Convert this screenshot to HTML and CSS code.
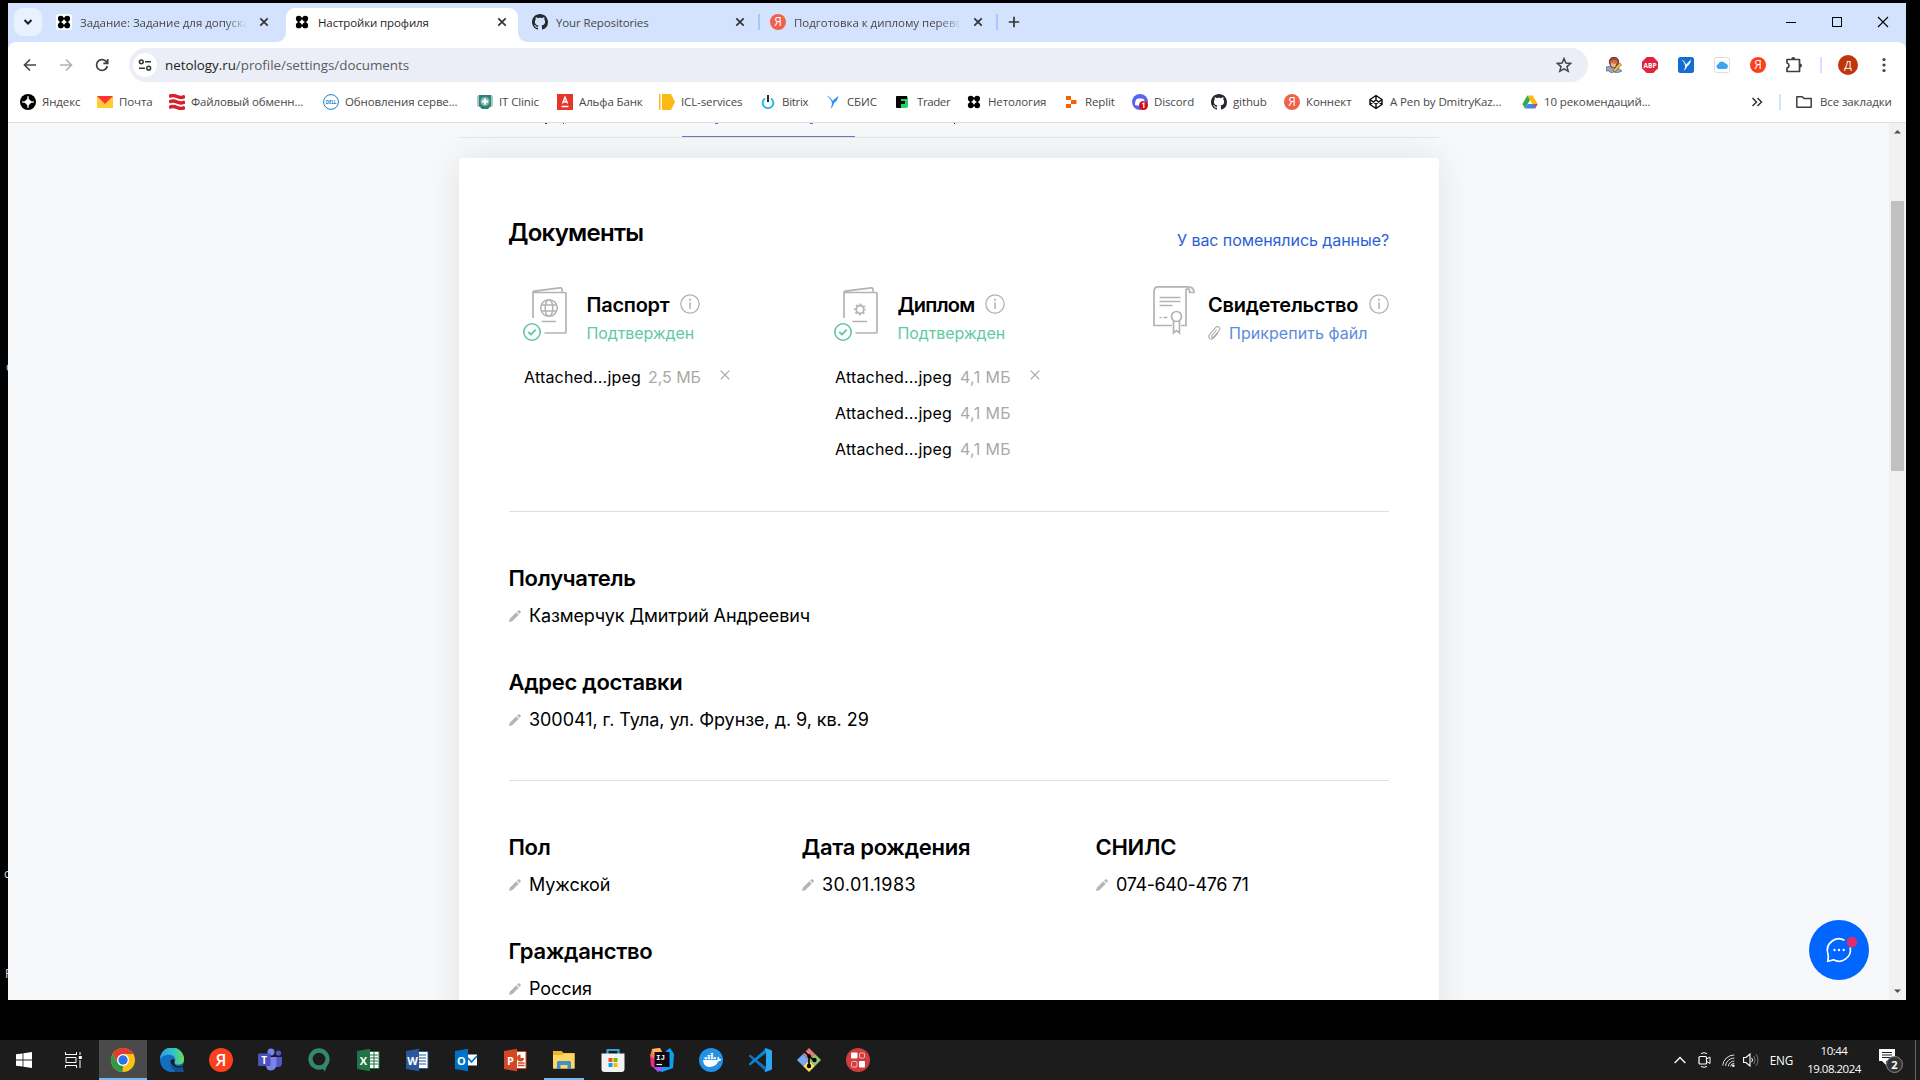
FILE: index.html
```html
<!DOCTYPE html>
<html lang="ru">
<head>
<meta charset="utf-8">
<title>Настройки профиля</title>
<link rel="stylesheet" href="styles.css">
</head>
<body>
<svg class="sprite" aria-hidden="true">
  <symbol id="netology" viewBox="0 0 16 16"><rect x="3" y="3" width="10" height="10" rx="1"/><circle cx="4.300" cy="4.100" r="3.300"/><circle cx="11.700" cy="4.100" r="3.300"/><circle cx="4.300" cy="11.900" r="3.300"/><circle cx="11.700" cy="11.900" r="3.300"/><path d="M8 4.600 9.300 6.700 11.400 8 9.300 9.300 8 11.400 6.700 9.300 4.600 8 6.700 6.700Z" fill="#fff"/></symbol>
  <symbol id="github" viewBox="0 0 16 16"><path d="M8 0C3.58 0 0 3.58 0 8c0 3.54 2.29 6.53 5.47 7.59.4.07.55-.17.55-.38 0-.19-.01-.82-.01-1.49-2.01.37-2.53-.49-2.69-.94-.09-.23-.48-.94-.82-1.13-.28-.15-.68-.52-.01-.53.63-.01 1.08.58 1.23.82.72 1.21 1.87.87 2.33.66.07-.52.28-.87.51-1.07-1.78-.2-3.64-.89-3.64-3.95 0-.87.31-1.59.82-2.15-.08-.2-.36-1.02.08-2.12 0 0 .67-.21 2.2.82.64-.18 1.32-.27 2-.27s1.36.09 2 .27c1.53-1.04 2.2-.82 2.2-.82.44 1.1.16 1.92.08 2.12.51.56.82 1.27.82 2.15 0 3.07-1.87 3.75-3.65 3.95.29.25.54.73.54 1.48 0 1.07-.01 1.93-.01 2.2 0 .21.15.46.55.38A8.01 8.01 0 0 0 16 8c0-4.42-3.58-8-8-8z" fill="#24292f"/></symbol>
  <symbol id="close" viewBox="0 0 16 16"><path d="M4.300 4.300 11.700 11.700M11.700 4.300 4.300 11.700" stroke="currentColor" stroke-width="1.700" fill="none"/></symbol>
  <symbol id="info" viewBox="0 0 20 20"><circle cx="10" cy="10" r="9.200" fill="none" stroke="#b3b3b3" stroke-width="1.300"/><rect x="9.300" y="8.300" width="1.500" height="6.700" fill="#b3b3b3"/><circle cx="10" cy="5.800" r="1.100" fill="#b3b3b3"/></symbol>
  <symbol id="pencil" viewBox="0 0 12 12"><path d="M0 12 .8 8.800 7.300 2.300 9.700 4.700 3.200 11.200ZM8.100 1.500 9.200.4Q9.900-.2 10.600.4L11.600 1.400Q12.200 2.100 11.600 2.800L10.500 3.900Z" fill="#b5b5b5"/></symbol>
  <symbol id="check" viewBox="0 0 18 18"><circle cx="9" cy="9" r="8.200" fill="#fff" stroke="#5fc7a3" stroke-width="1.600"/><path d="M5.200 9 8 11.500 12.700 6.600" fill="none" stroke="#5fc7a3" stroke-width="1.800"/></symbol>
  <symbol id="booklet" viewBox="0 0 45 56"><path d="M10 32V6.300Q10 5.300 11 5.200L37 1.800Q39 1.500 39 3.500V5.500M10 6.500H42Q43 6.500 43 7.500V46Q43 47 42 47H21.500M18.500 35.500H33" fill="none" stroke="#b3b3b3" stroke-width="1.700"/></symbol>
  <symbol id="cross-thin" viewBox="0 0 10 10"><path d="M.7.7 9.300 9.300M9.300.7.7 9.300" stroke="#a6a6a6" stroke-width="1.200"/></symbol>
</svg>

<div class="desktop">
  <span class="stray stray-a">с</span>
  <span class="stray stray-b">с</span>
  <span class="stray stray-c">F</span>

  <div class="window">
    <div class="tabstrip">
      <div class="tab-search"><svg width="12" height="12" viewBox="0 0 12 12"><path d="M2.500 4 6 7.500 9.500 4" fill="none" stroke="#1f1f1f" stroke-width="2"/></svg></div>
      <div class="tab"><span class="fav fav-white"><svg width="14" height="14"><use href="#netology"/></svg></span><span class="tab-title fade">Задание: Задание для допуска</span><svg class="tab-close" width="16" height="16"><use href="#close"/></svg></div>
      <div class="tab active"><span class="fav"><svg width="14" height="14"><use href="#netology"/></svg></span><span class="tab-title">Настройки профиля</span><svg class="tab-close" width="16" height="16"><use href="#close"/></svg></div>
      <div class="tab divided"><span class="fav"><svg width="16" height="16"><use href="#github"/></svg></span><span class="tab-title">Your Repositories</span><svg class="tab-close" width="16" height="16"><use href="#close"/></svg></div>
      <div class="tab divided"><span class="fav ya ya-soft">Я</span><span class="tab-title fade">Подготовка к диплому перево</span><svg class="tab-close" width="16" height="16"><use href="#close"/></svg></div>
      <svg class="new-tab" width="12" height="12" viewBox="0 0 12 12"><path d="M6 .8V11.200M.8 6H11.200" stroke="#333" stroke-width="1.700"/></svg>
      <div class="win-controls">
        <svg width="46" height="38" viewBox="0 0 46 38"><path d="M18 19.500H28" stroke="#000"/></svg>
        <svg width="46" height="38" viewBox="0 0 46 38"><rect x="18.500" y="14.500" width="9" height="9" fill="none" stroke="#000"/></svg>
        <svg width="46" height="38" viewBox="0 0 46 38"><path d="M18 14 28 24M28 14 18 24" stroke="#000" stroke-width="1.100"/></svg>
      </div>
    </div>

    <div class="toolbar">
      <div class="nav">
        <svg width="16" height="16" viewBox="0 0 16 16"><path d="M14 8H3M8 2.500 2.500 8 8 13.500" fill="none" stroke="#474747" stroke-width="1.700"/></svg>
        <svg width="16" height="16" viewBox="0 0 16 16"><path d="M2 8H13M8 2.500 13.500 8 8 13.500" fill="none" stroke="#b0b3b7" stroke-width="1.600"/></svg>
        <svg width="16" height="16" viewBox="0 0 16 16"><path d="M13.300 9A5.400 5.400 0 1 1 11.800 4.200L13.500 6M13.700 2V6.300H9.400" fill="none" stroke="#3c4043" stroke-width="1.700"/></svg>
      </div>
      <div class="omnibox">
        <span class="site-info"><svg width="14" height="14" viewBox="0 0 14 14"><circle cx="3.300" cy="3.800" r="1.900" fill="none" stroke="#333" stroke-width="1.500"/><circle cx="10.700" cy="10.200" r="1.900" fill="none" stroke="#333" stroke-width="1.500"/><path d="M7 3.800H13M1 10.200H7" stroke="#333" stroke-width="1.500"/></svg></span>
        <span class="url"><b>netology.ru</b>/profile/settings/documents</span>
        <svg class="star" width="16" height="16" viewBox="0 0 16 16"><path d="M8 1.500 9.900 6 14.800 6.400 11 9.600 12.200 14.300 8 11.800 3.800 14.300 5 9.600 1.200 6.400 6.100 6Z" fill="none" stroke="#444" stroke-width="1.500"/></svg>
      </div>
      <div class="extensions">
        <svg width="16" height="16" viewBox="0 0 16 16"><path d="M0 10 4 9 8 10 12 11 16 14 11 16 8 15 5 16 3 14 0 14Z" fill="#93a6c8" stroke="#555" stroke-width=".6"/><circle cx="8" cy="4.800" r="4.700" fill="#a8452e" stroke="#4a1d14" stroke-width=".8"/><path d="M4 5Q8 1.500 11.500 4.500L10 8H6Z" fill="#cf6d4d"/><path d="M4 6 5 10 9 11 11 7" fill="#e9b48d" stroke="#4a1d14" stroke-width=".7"/><path d="M7 13.500 13.500 6 15.500 7.700 9 15Z" fill="#f0c53f" stroke="#6b4a12" stroke-width=".6"/></svg>
        <svg width="16" height="16" viewBox="0 0 16 16"><path d="M4.700 0h6.600L16 4.700v6.600L11.300 16H4.700L0 11.300V4.700Z" fill="#e0233f"/><text x="8" y="10.700" text-anchor="middle" class="abp">ABP</text></svg>
        <svg width="16" height="16" viewBox="0 0 16 16"><rect width="16" height="16" rx="2.500" fill="#156cd3"/><path d="M3.500 2.500Q6.500 3.500 8 7.500 10 5.500 13 2.500 12.500 7 9.300 9.300 8.500 12 5.500 14 7.700 11 7.200 8.500 6.500 5 3.500 2.500Z" fill="#fff"/></svg>
        <svg width="16" height="16" viewBox="0 0 16 16"><rect x=".5" y=".5" width="15" height="15" rx="2" fill="#fff" stroke="#d9dde2"/><path d="M4.500 12a2.600 2.600 0 0 1-.2-5A3.800 3.800 0 0 1 11 6.200 3 3 0 0 1 12 12Z" fill="#3ba4f3"/></svg>
        <span class="ya">Я</span>
        <svg width="18" height="18" viewBox="0 0 18 18"><path d="M2 3.500H14.500V15.500H2V12Q4 11.500 4 9.500T2 7Z" fill="none" stroke="#3c4043" stroke-width="1.700" stroke-linejoin="round"/><path d="M6.300 3A2 2 0 0 1 10.300 3ZM15 7.500A2 2 0 0 1 15 11.500Z" fill="#3c4043"/></svg>
      </div>
      <span class="tool-sep"></span>
      <span class="avatar">Д</span>
      <svg class="kebab" width="4" height="16" viewBox="0 0 4 16"><circle cx="2" cy="2.500" r="1.600"/><circle cx="2" cy="8" r="1.600"/><circle cx="2" cy="13.500" r="1.600"/></svg>
    </div>

    <div class="bookmarks">
      <div class="bm"><svg width="16" height="16" viewBox="0 0 16 16"><circle cx="8" cy="8" r="8"/><path d="M8 2Q8.300 7.700 14 8 8.300 8.300 8 14 7.700 8.300 2 8 7.700 7.700 8 2Z" fill="#fff" stroke="#fff" stroke-width=".6"/></svg><span>Яндекс</span></div>
      <div class="bm"><svg width="16" height="16" viewBox="0 0 16 16"><rect y="2" width="16" height="12" fill="#fc3"/><path d="M0 2H16L8 10Z" fill="#f33"/></svg><span>Почта</span></div>
      <div class="bm"><svg width="16" height="16" viewBox="0 0 16 16"><g fill="none" stroke="#d81f2c" stroke-width="3.400"><path d="M0 2.500Q4 .5 8 2.500T16 2.300"/><path d="M0 8Q4 6 8 8T16 7.800"/><path d="M0 13.500Q4 11.500 8 13.500T16 13.300"/></g></svg><span>Файловый обменн...</span></div>
      <div class="bm"><svg width="16" height="16" viewBox="0 0 16 16"><circle cx="8" cy="8" r="7.400" fill="#fff" stroke="#1683c2" stroke-width="1"/><text x="8" y="9.800" text-anchor="middle" class="dell">DELL</text></svg><span>Обновления серве...</span></div>
      <div class="bm"><svg width="16" height="16" viewBox="0 0 16 16"><rect y="1" width="16" height="12" rx="2" fill="#a9c9c6"/><path d="M2 1H14V12L11 15H5L2 12Z" fill="#317f7b"/><circle cx="8" cy="7.500" r="4.600" fill="#7fbcae"/><path d="M8 4.500V10.500M5 7.500H11" stroke="#fff" stroke-width="2.200"/></svg><span>IT Clinic</span></div>
      <div class="bm"><svg width="16" height="16" viewBox="0 0 16 16"><rect width="16" height="16" fill="#e8352b"/><path d="M5.500 9.500 8 3.200 10.500 9.500M6.200 7.800H9.800M4.600 12.500H11.400" fill="none" stroke="#fff" stroke-width="1.400"/></svg><span>Альфа Банк</span></div>
      <div class="bm"><svg width="16" height="16" viewBox="0 0 16 16"><path d="M0 0H1.500V16H0ZM3 0H12L16 8 12 16H3Z" fill="#fdb913"/></svg><span>ICL-services</span></div>
      <div class="bm tight"><svg width="16" height="16" viewBox="0 0 16 16"><path d="M5 4.500A5.300 5.300 0 1 0 11 4.500" fill="none" stroke="#27bdde" stroke-width="2"/><path d="M8 1V8" stroke="#111" stroke-width="1.800"/></svg><span>Bitrix</span></div>
      <div class="bm"><svg width="16" height="16" viewBox="0 0 16 16"><path d="M1.500 1.500Q6 3 7.500 7 10 4.500 13.500 2 12.500 7 9 9 8.500 12.500 5.500 15 7.500 11 6.800 8 5.500 4.500 1.500 1.500Z" fill="#2a8fee"/></svg><span>СБИС</span></div>
      <div class="bm tighter"><svg width="16" height="16" viewBox="0 0 16 16"><rect x="1" y="2" width="12" height="12" rx="2" fill="#23d366"/><path d="M1 3Q1 2 2 2H12V5H6V7H10V10H6V14H2Q1 14 1 13Z" fill="#000"/></svg><span>Trader</span></div>
      <div class="bm"><svg width="16" height="16" viewBox="0 0 16 16"><g transform="translate(1 1) scale(.87)"><use href="#netology" width="16" height="16"/></g></svg><span>Нетология</span></div>
      <div class="bm"><svg width="16" height="16" viewBox="0 0 16 16"><path d="M3 2H8V6H3ZM8 6H13.500V10H8ZM3 10H8V14H3Z" fill="#f26207"/></svg><span>Replit</span></div>
      <div class="bm"><svg width="16" height="16" viewBox="0 0 16 16"><circle cx="8" cy="8" r="8" fill="#5865f2"/><path d="M3 11Q3 5 6 4.500H10Q13 5 13 9L8 12Z" fill="#fff"/><circle cx="11.500" cy="11.500" r="4.500" fill="#d40c1a"/><path d="M10.300 10 11.800 9V14" fill="none" stroke="#fff" stroke-width="1.300"/></svg><span>Discord</span></div>
      <div class="bm"><svg width="16" height="16"><use href="#github"/></svg><span>github</span></div>
      <div class="bm"><span class="ya ya-soft">Я</span><span>Коннект</span></div>
      <div class="bm"><svg width="16" height="16" viewBox="0 0 16 16"><path d="M8 1.500 14 5.500V10.500L8 14.500 2 10.500V5.500ZM8 1.500V5.500M8 10.500V14.500M2 5.500 8 10 14 5.500M2 10.500 8 6 14 10.500" fill="none" stroke="#111" stroke-width="1.500" stroke-linejoin="round"/></svg><span>A Pen by DmitryKaz...</span></div>
      <div class="bm"><svg width="16" height="16" viewBox="0 0 16 16"><path d="M5.300 1.500H10.700L15.600 10H10.300Z" fill="#fbbc04"/><path d="M5.300 1.500 8 6 3 14.500 .4 10Z" fill="#34a853"/><path d="M5.700 10H15.600L13 14.500H3Z" fill="#4285f4"/><path d="M12.500 10H15.600L13 14.500Z" fill="#ea4335"/></svg><span>10 рекомендаций...</span></div>
      <svg class="more" width="12" height="12" viewBox="0 0 12 12"><path d="M1.500 2 5.500 6 1.500 10M6.500 2 10.500 6 6.500 10" fill="none" stroke="#333" stroke-width="1.500"/></svg>
      <span class="bm-sep"></span>
      <div class="bm all"><svg width="16" height="16" viewBox="0 0 16 16"><path d="M.8 3V13.200H15.200V4.500H8L6.300 2.700H.8Z" fill="none" stroke="#3c4043" stroke-width="1.500" stroke-linejoin="round"/></svg><span>Все закладки</span></div>
    </div>

    <div class="viewport">
      <main class="page">
        <div class="subnav"><span class="subnav-current"></span></div>
        <section class="card">
          <header class="card-head">
            <h1>Документы</h1>
            <a class="changed">У вас поменялись данные?</a>
          </header>

          <div class="docs">
            <article class="doc">
              <div class="doc-head">
                <div class="doc-icon"><svg width="45" height="56"><use href="#booklet"/></svg><svg class="emblem" width="20" height="20" viewBox="0 0 20 20"><g fill="none" stroke="#b3b3b3" stroke-width="1.500"><circle cx="10" cy="10" r="8.300"/><ellipse cx="10" cy="10" rx="3.800" ry="8.300"/><path d="M2.500 7H17.500M2.500 13H17.500"/></g></svg><svg class="verified" width="18" height="18"><use href="#check"/></svg></div>
                <div class="doc-text">
                  <h2><span>Паспорт</span><svg width="20" height="20"><use href="#info"/></svg></h2>
                  <p class="ok">Подтвержден</p>
                </div>
              </div>
              <ul>
                <li><span>Attached...jpeg</span><i class="wide">2,5 МБ</i><svg width="10" height="10"><use href="#cross-thin"/></svg></li>
              </ul>
            </article>

            <article class="doc">
              <div class="doc-head">
                <div class="doc-icon"><svg width="45" height="56"><use href="#booklet"/></svg><svg class="emblem" width="20" height="20" viewBox="0 0 20 20"><g fill="none" stroke="#b3b3b3"><circle cx="10" cy="11.500" r="3.800" stroke-width="1.700"/><circle cx="10" cy="11.500" r="5.200" stroke-width="1.600" stroke-dasharray="2.040 2.040" stroke-dashoffset="1.020"/></g></svg><svg class="verified" width="18" height="18"><use href="#check"/></svg></div>
                <div class="doc-text">
                  <h2><span class="diploma">Диплом</span><svg width="20" height="20"><use href="#info"/></svg></h2>
                  <p class="ok">Подтвержден</p>
                </div>
              </div>
              <ul>
                <li><span>Attached...jpeg</span><i>4,1 МБ</i><svg width="10" height="10"><use href="#cross-thin"/></svg></li>
                <li><span>Attached...jpeg</span><i>4,1 МБ</i></li>
                <li><span>Attached...jpeg</span><i>4,1 МБ</i></li>
              </ul>
            </article>

            <article class="doc">
              <div class="doc-head">
                <div class="doc-icon scroll-icon"><svg width="42" height="50" viewBox="0 0 42 50"><g fill="none" stroke="#b3b3b3" stroke-width="1.700"><path d="M19 39.500H1V6Q1 .9 5 .9H35Q41 .9 41 6.500H36.500V4.500Q36.500 2.800 34.700 2.800T33 5V39.500H28"/><circle cx="23.500" cy="30.500" r="5"/><path d="M20.500 35V47L23.500 44.500 26.500 47V35"/><path d="M6.500 11.500H27.500M6.500 15.500H27.500M6.500 19.500H19.500M6.500 31.500H8.500M10.500 31.500H14.500"/></g></svg></div>
                <div class="doc-text">
                  <h2><span>Свидетельство</span><svg width="20" height="20"><use href="#info"/></svg></h2>
                  <p class="attach"><svg width="13" height="14" viewBox="0 0 13 14"><path d="M8.500 4 3.900 9.500Q3.200 10.500 4 11.200 4.900 11.800 5.700 10.900L11.200 4.500Q12.700 2.500 11 1.100 9.200-.1 7.500 1.600L1.700 8.300Q-.2 10.800 1.800 12.600 4 14 6 11.700L10.300 6.700" fill="none" stroke="#aaa" stroke-width="1.100"/></svg><span>Прикрепить файл</span></p>
                </div>
              </div>
            </article>
          </div>

          <div class="group">
            <div class="field"><h3>Получатель</h3><p><svg width="12" height="12"><use href="#pencil"/></svg><span class="name">Казмерчук Дмитрий Андреевич</span></p></div>
            <div class="field"><h3>Адрес доставки</h3><p><svg width="12" height="12"><use href="#pencil"/></svg><span>300041, г. Тула, ул. Фрунзе, д. 9, кв. 29</span></p></div>
          </div>

          <div class="group columns">
            <div class="field"><h3>Пол</h3><p><svg width="12" height="12"><use href="#pencil"/></svg><span>Мужской</span></p></div>
            <div class="field"><h3>Дата рождения</h3><p><svg width="12" height="12"><use href="#pencil"/></svg><span class="date">30.01.1983</span></p></div>
            <div class="field"><h3>СНИЛС</h3><p><svg width="12" height="12"><use href="#pencil"/></svg><span class="snils">074-640-476 71</span></p></div>
            <div class="field"><h3>Гражданство</h3><p><svg width="12" height="12"><use href="#pencil"/></svg><span>Россия</span></p></div>
          </div>
        </section>
      </main>
      <div class="scrollbar">
        <svg width="17" height="17" viewBox="0 0 17 17"><path d="M5 10.500 8.500 7 12 10.500Z" fill="#505050"/></svg>
        <span class="thumb"></span>
        <svg width="17" height="17" viewBox="0 0 17 17"><path d="M5 6.500 8.500 10 12 6.500Z" fill="#505050"/></svg>
      </div>
      <div class="chat"><svg width="60" height="60" viewBox="0 0 60 60"><circle cx="30" cy="30" r="30" fill="#06f"/><path d="M35.500 20.300A11.500 11.500 0 0 0 19 34Q19.800 37 18.800 41.200 22.500 40.700 24.500 39.800A11.500 11.500 0 0 0 41.200 27.500" fill="none" stroke="#fff" stroke-width="1.700"/><circle cx="25.500" cy="30" r="1.200" fill="#fff"/><circle cx="30" cy="30" r="1.200" fill="#fff"/><circle cx="34.700" cy="30" r="1.200" fill="#fff"/><circle cx="43" cy="22" r="5.200" fill="#e6286e"/></svg></div>
    </div>
  </div>

  <footer class="taskbar">
    <div class="task"><svg width="16" height="16" viewBox="0 0 16 16"><path d="M0 2.300 6.600 1.400V7.500H0ZM7.400 1.300 16 0V7.500H7.400ZM0 8.400H6.600V14.600L0 13.700ZM7.400 8.400H16V16L7.400 14.700Z" fill="#fff"/></svg></div>
    <div class="task"><svg width="17" height="16" viewBox="0 0 17 16"><path d="M.5 0V3M11.500 0V3M.5 2.500H11.500M.5 16V13M11.500 16V13M.5 13.500H11.500M1 5.500H11V10.500H1ZM15 0V3M15 8V16" fill="none" stroke="#fff"/><rect x="13.800" y="4" width="3" height="3" fill="#fff"/></svg></div>
    <div class="task first focused"><svg width="24" height="24" viewBox="0 0 24 24"><circle cx="12" cy="12" r="12" fill="#fbc116"/><path d="M1.600 6A12 12 0 0 1 22.400 6H12L6.800 15Z" fill="#e33b2e"/><path d="M1.600 6 6.800 15 12 18 11.500 24A12 12 0 0 1 1.600 6Z" fill="#2d9a48"/><circle cx="12" cy="12" r="6" fill="#fff"/><circle cx="12" cy="12" r="4.700" fill="#2a74e8"/></svg></div>
    <div class="task"><svg width="24" height="24" viewBox="0 0 24 24"><defs><linearGradient id="edge" x1="0" x2="1"><stop offset="0" stop-color="#279fe2"/><stop offset=".6" stop-color="#35c4c5"/><stop offset="1" stop-color="#6fdc56"/></linearGradient></defs><circle cx="12" cy="12" r="12" fill="#126fbf"/><path d="M0 11A12 12 0 0 1 24 11.500Q24 16 19 16.500 13.500 16.500 15 13.500 16.500 8.500 11 7 4 6 0 11Z" fill="url(#edge)"/><path d="M9.500 12Q9.500 18.500 16 19.500 20 20 22.800 17.500L24 16V24H18Q10 22 9.500 12Z" fill="#0f4f92"/><path d="M24 16Q20 19.500 16 17.500 13.500 16 14.500 13.800 15.300 11.500 12.500 11 9.500 12 11 15.500 14 20.300 20 19.500L22.500 18.300 24 24Z" fill="#1c1c1c"/></svg></div>
    <div class="task"><span class="ya ya-big">Я</span></div>
    <div class="task"><svg width="24" height="24" viewBox="0 0 24 24"><circle cx="13" cy="4" r="3.500" fill="#7b83eb"/><circle cx="20.500" cy="5" r="2.600" fill="#5059c9"/><path d="M16 9H24V15Q24 19 20 19H16Z" fill="#5059c9"/><path d="M8 9H18.500V16Q18 22.500 13 22.500T8 17Z" fill="#7b83eb"/><rect y="5.500" width="12.500" height="12.500" rx="1" fill="#4b53bc"/><text x="6.200" y="15.500" text-anchor="middle" class="office teams">T</text></svg></div>
    <div class="task"><svg width="24" height="24" viewBox="0 0 24 24"><circle cx="12" cy="11" r="8.500" fill="none" stroke="#34896b" stroke-width="4.300"/><path d="M12 17 20 17 18 23.500Z" fill="#34896b"/></svg></div>
    <div class="task"><svg width="24" height="24" viewBox="0 0 24 24"><path d="M12 3.500H23V20.500H12Z" fill="#fff" stroke="#217346"/><path d="M14 7H22M14 10H22M14 13H22M14 16H22M18 4V20" stroke="#217346"/><path d="M1 3 14 .8V23.200L1 21Z" fill="#217346"/><text x="7.500" y="16.500" text-anchor="middle" class="office">X</text></svg></div>
    <div class="task"><svg width="24" height="24" viewBox="0 0 24 24"><path d="M12 3.500H23V20.500H12Z" fill="#fff" stroke="#2b579a"/><path d="M14 7H21M14 10H21M14 13H21M14 16H21" stroke="#2b579a"/><path d="M1 3 14 .8V23.200L1 21Z" fill="#2b579a"/><text x="7.500" y="16.500" text-anchor="middle" class="office">W</text></svg></div>
    <div class="task"><svg width="24" height="24" viewBox="0 0 24 24"><path d="M13 6.500H23V17.500H13Z" fill="#fff"/><path d="M14 10 17.500 14 23 8" fill="none" stroke="#0072c6" stroke-width="1.700"/><path d="M1 3 14 .8V23.200L1 21Z" fill="#0072c6"/><text x="7.500" y="16.500" text-anchor="middle" class="office">O</text></svg></div>
    <div class="task"><svg width="24" height="24" viewBox="0 0 24 24"><path d="M12 3.500H23V20.500H12Z" fill="#fff" stroke="#d24726"/><path d="M15 15H21.500M15 17.500H21.500" stroke="#d24726" stroke-width="1.300"/><path d="M17.500 6.500A3.500 3.500 0 1 0 21 10H17.500Z" fill="#d24726"/><path d="M1 3 14 .8V23.200L1 21Z" fill="#d24726"/><text x="7.500" y="16.500" text-anchor="middle" class="office">P</text></svg></div>
    <div class="task open"><svg width="24" height="24" viewBox="0 0 24 24"><path d="M1 3H9.500L11.500 5H22.500V20.500H1Z" fill="#f0b429"/><path d="M1 7H10L12 5.500H22.500V20.500H1Z" fill="#fdd663"/><path d="M5 21V14.500Q5 13 6.500 13H17.500Q19 13 19 14.500V21H15.500V17H8.500V21Z" fill="#3e90cc"/></svg></div>
    <div class="task"><svg width="24" height="24" viewBox="0 0 24 24"><path d="M6.500 6V2H17.500V6" fill="none" stroke="#2fa0d8" stroke-width="2.200"/><path d="M.5 5.500H23.500V21Q23.500 24 20.500 24H3.500Q.5 24 .5 21Z" fill="#f2f2f2"/><path d="M7.500 10H11.500V14H7.500Z" fill="#f25022"/><path d="M12.500 10H16.500V14H12.500Z" fill="#7fba00"/><path d="M7.500 15H11.500V19H7.500Z" fill="#00a4ef"/><path d="M12.500 15H16.500V19H12.500Z" fill="#ffb900"/></svg></div>
    <div class="task"><svg width="24" height="24" viewBox="0 0 24 24"><path d="M2 1 10 0 13 6 8 20 1 18 3 12 0 8Z" fill="#f97a3d"/><path d="M2 1 10 0 12 4 4 8Z" fill="#fdb45c"/><path d="M0 8 5 11 8 22 1 18Z" fill="#e42f7d"/><path d="M16 3 20 0 24 6 23 20 12 24 6 22Z" fill="#0ea0f0"/><path d="M3 19 8 24 14 20Z" fill="#b74af7"/><rect x="4.500" y="4" width="15" height="15" fill="#0b0612"/><text x="6" y="11.500" class="ij">IJ</text><path d="M6.500 16.500H12" stroke="#fff" stroke-width="1.200"/></svg></div>
    <div class="task"><svg width="24" height="24" viewBox="0 0 24 24"><circle cx="12" cy="12" r="12" fill="#2391e6"/><path d="M4 12H18.500Q17.800 10 19 8.500 20.500 9.500 20.500 11 22 10.800 22.500 11.300 21.500 13.500 19.300 13.300 17 19 10.500 19 4.500 19 4 12Z" fill="#fff"/><path d="M5.500 9.300H8V11.300H5.500ZM8.600 9.300H11.100V11.300H8.600ZM11.700 9.300H14.200V11.300H11.700ZM14.700 9.300H17V11.300H14.700ZM8.600 7H11.100V8.800H8.600ZM11.700 7H14.200V8.800H11.700ZM11.700 5H14.200V6.500H11.700Z" fill="#fff"/></svg></div>
    <div class="task"><svg width="24" height="24" viewBox="0 0 24 24"><path d="M.5 8 2.200 6.500 18 19V23.500Z" fill="#0c74be"/><path d="M.5 16 2.200 17.500 18 5V.5Z" fill="#0a86d8"/><path d="M17.500 0 24 2.500V21.500L17.500 24 16.500 23 18 21V3L16.500 1Z" fill="#2aa9f3"/></svg></div>
    <div class="task"><svg width="24" height="24" viewBox="0 0 24 24"><path d="M12 0 18 6 12 12 6 6Z" fill="#e9777b"/><path d="M6 6 12 12 6 18 0 12Z" fill="#7aa7f5"/><path d="M18 6 24 12 18 18 12 12Z" fill="#8fc96c"/><path d="M12 12 18 18 12 24 6 18Z" fill="#fbdc6a"/><path d="M7.500 3.500 12 8V19M12 8 17 12.500" fill="none" stroke="#161616" stroke-width="1.800"/><circle cx="12" cy="8" r="1.900"/><circle cx="12" cy="18" r="2.200"/><circle cx="17.500" cy="12" r="2.200"/></svg></div>
    <div class="task"><svg width="24" height="24" viewBox="0 0 24 24"><circle cx="12" cy="12" r="12" fill="#cf3d40"/><rect x="5" y="4.500" width="6.500" height="6" rx="1" fill="#fff"/><rect x="13" y="13" width="6" height="6.500" rx="1" fill="#fff"/><rect x="13.500" y="5" width="5" height="5" rx="1" fill="none" stroke="#f3b9ba"/><rect x="5.500" y="13.500" width="5.500" height="5.500" rx="1" fill="none" stroke="#f3b9ba"/></svg></div>
    <div class="tray">
      <svg width="12" height="8" viewBox="0 0 12 8"><path d="M.7 7 6 1.500 11.300 7" fill="none" stroke="#fff" stroke-width="1.300"/></svg>
      <svg width="13" height="16" viewBox="0 0 13 16"><path d="M3 1.500Q6 0 9 1.500M3 14.500Q6 16 9 14.500" fill="none" stroke="#fff"/><rect x="1" y="4.500" width="7.500" height="7.500" rx="1" fill="none" stroke="#fff" stroke-width="1.200"/><path d="M8.500 7 12 5V11.500L8.500 9.500" fill="none" stroke="#fff"/></svg>
      <svg width="13" height="13" viewBox="0 0 13 13"><path d="M.7 11.500A11.500 11.500 0 0 1 12.300 1M3.500 12A8.800 8.800 0 0 1 12.300 4M6.300 12.300A6 6 0 0 1 12.300 7M8.500 12.500A4 4 0 0 1 12.300 9.300" fill="none" stroke="#ddd"/><circle cx="11.300" cy="11.700" r="1.300" fill="#fff"/></svg>
      <svg width="16" height="14" viewBox="0 0 16 14"><path d="M.6 4.500H3L7 1V13L3 9.500H.6Z" fill="none" stroke="#fff" stroke-width="1.100"/><path d="M8.700 4.800Q10.300 7 8.700 9.200" fill="none" stroke="#fff"/><path d="M10.800 3Q13.500 7 10.800 11M13 1.200Q17 7 13 12.800" fill="none" stroke="#777"/></svg>
      <span class="lang">ENG</span>
      <div class="clock"><span>10:44</span><span>19.08.2024</span></div>
      <div class="notice"><svg width="26" height="28" viewBox="0 0 26 28"><path d="M0 3H16V15H7V19L3 15H0Z" fill="#fff"/><path d="M3 6.500H13M3 9H13M3 11.500H13" stroke="#1c1c1c"/><circle cx="15.500" cy="18.500" r="8" fill="#333" stroke="#888" stroke-width="1"/><text x="15.500" y="22.500" text-anchor="middle" class="badge">2</text></svg></div>
      <span class="peek"></span>
    </div>
  </footer>
</div>
</body>
</html>
```
FILE: styles.css
```css
* { box-sizing: border-box; }
body { margin: 0; background: #000; font-family: Inter, "Liberation Sans", sans-serif; overflow: hidden; }
h1, h2, h3, p, ul { margin: 0; padding: 0; font-weight: 400; }
svg { display: block; flex: none; }
.sprite { position: absolute; width: 0; height: 0; }

.desktop { position: relative; width: 1920px; height: 1080px; display: flex; flex-direction: column; justify-content: space-between; padding-top: 3px; overflow: hidden; }

/* desktop icon captions showing from behind the window */
.stray { position: absolute; left: 4px; color: #ddd; font: 12px/14px "Open Sans", sans-serif; }
.stray-a { top: 360px; left: 6px; }
.stray-b { top: 867px; }
.stray-c { top: 967px; left: 5px; }

.window { width: 1898px; height: 997px; margin-left: 8px; display: flex; flex-direction: column; background: linear-gradient(#d3e3fd 60px, #fff 60px); font-family: "Open Sans", "Noto Sans", sans-serif; position: relative; }

.tabstrip { height: 39px; flex: none; display: flex; align-items: flex-start; padding: 5px 0 0 6px; }
.tab-search { width: 28px; height: 28px; border-radius: 9px; background: #e9f1fe; display: flex; align-items: center; justify-content: center; margin-right: 6px; }
.tab { position: relative; width: 232px; height: 34px; margin-right: 6px; padding: 0 8px 7px; display: flex; align-items: center; font-size: 11.5px; letter-spacing: -.12px; color: #474747; white-space: nowrap; }
.tab.active { background: #fff; border-radius: 9px 9px 0 0; color: #1f1f1f; }
.tab.active::before, .tab.active::after { content: ""; position: absolute; bottom: 0; width: 9px; height: 9px; }
.tab.active::before { left: -9px; background: radial-gradient(circle at 0 0, transparent 8.5px, #fff 9px); }
.tab.active::after { right: -9px; background: radial-gradient(circle at 100% 0, transparent 8.5px, #fff 9px); }
.tab.divided::after { content: ""; position: absolute; right: -4px; top: 6px; width: 2px; height: 16px; background: #a8c7fa; }
.fav { width: 16px; height: 16px; flex: none; display: flex; align-items: center; justify-content: center; }
.fav-white { background: #fff; border-radius: 3px; }
.tab-title { width: 166px; margin: 2px 10px 0 8px; overflow: hidden; line-height: 18px; flex: none; }
.fade { letter-spacing: -.03px; -webkit-mask-image: linear-gradient(90deg, #000 145px, transparent 168px); mask-image: linear-gradient(90deg, #000 145px, transparent 168px); }
.tab-close { color: #333; }
.ya { width: 16px; height: 16px; flex: none; border-radius: 50%; background: #fc3f1d; color: #fff; display: flex; align-items: center; justify-content: center; font: 12px/16px "Open Sans", sans-serif; }
.ya-soft { background: #f0604d; }
.ya-big { width: 24px; height: 24px; font: 600 17px/24px "Open Sans", sans-serif; }
.new-tab { margin: 8px 0 0 8px; }
.win-controls { display: flex; margin: -5px 0 0 auto; }

.toolbar { height: 46px; flex: none; display: flex; align-items: center; padding: 0 20px 0 14px; background: #fff; border-radius: 8px 8px 0 0; }
.nav { display: flex; gap: 20px; width: 107px; }
.omnibox { width: 1459px; height: 34px; border-radius: 17px; background: #ebeef7; display: flex; align-items: center; padding: 0 16px 0 4px; }
.site-info { width: 24px; height: 24px; border-radius: 50%; background: #fff; display: flex; align-items: center; justify-content: center; margin-right: 8px; }
.url { font-size: 13.4px; letter-spacing: -.03px; line-height: 20px; color: #5a5d61; white-space: nowrap; }
.url b { font-weight: 400; color: #1f1f1f; }
.star { margin-left: auto; }
.extensions { display: grid; grid-template-columns: repeat(6, 36px); justify-items: center; align-items: center; margin-left: 8px; }
.abp { font: 700 6.5px "Open Sans", sans-serif; fill: #fff; }
.tool-sep { width: 2px; height: 16px; background: #d3e3fd; margin: 0 16px 0 8px; }
.avatar { width: 20px; height: 20px; border-radius: 50%; background: #bf360c; color: #fff; font-size: 11px; line-height: 19px; text-align: center; }
.kebab { margin-left: 24px; fill: #444; }

.bookmarks { height: 35px; flex: none; display: grid; grid-template-columns: 77px 72px 154px 154px 80px 102px 101px 65px 70px 71px 97px 69px 79px 73px 84px 154px 229px 28px 17px 110px; align-items: center; padding: 0 0 7px 12px; border-bottom: 1px solid #dcdfe3; background: #fff; font-size: 11.5px; letter-spacing: -.12px; color: #474747; white-space: nowrap; }
.bm { display: flex; align-items: center; gap: 6px; line-height: 18px; }
.bm.all { gap: 8px; }
.tight { letter-spacing: -.3px; }
.tighter { letter-spacing: -.4px; }
.dell { font: 700 4.5px "Open Sans", sans-serif; fill: #1683c2; }
.bm-sep { width: 2px; height: 16px; background: #d3e3fd; }

.viewport { flex: 1; min-height: 0; display: flex; overflow: hidden; background: #f7f8fa; position: relative; }
.page { width: 1881px; padding-left: 451px; font-family: Inter, "Liberation Sans", sans-serif; color: #000; }

/* section tabs, scrolled away except for the tips of a few descenders */
.subnav { width: 980px; height: 15px; border-bottom: 1px solid #e5e6e9; padding-left: 223px; display: flex; align-items: flex-end; background: linear-gradient(#444, #444) 86px 0 / 2px 1px no-repeat, linear-gradient(#444, #444) 104px 0 / 1px 1px no-repeat, linear-gradient(#7870c4, #7870c4) 256px 0 / 3px 1px no-repeat, linear-gradient(#7870c4, #7870c4) 351px 0 / 3px 1px no-repeat, linear-gradient(#222, #222) 495px 0 / 1px 1px no-repeat; }
.subnav-current { width: 173px; height: 1px; background: #7870c4; }
.card { width: 980px; height: 900px; margin-top: 20px; padding: 61px 50px 0; border-radius: 4px; background: #fff; box-shadow: 0 0 36px rgba(0, 0, 0, .09); }
.card-head { display: flex; justify-content: space-between; height: 67px; }
h1 { margin-left: -1px; font-size: 24px; line-height: 28px; font-weight: 600; letter-spacing: -.72px; white-space: nowrap; }
.changed { font-size: 16px; line-height: 24px; padding-top: 9px; letter-spacing: -.07px; color: #2a62d6; white-space: nowrap; }
.docs { display: grid; grid-template-columns: 311px 318px 1fr; height: 226px; padding-left: 14px; border-bottom: 1px solid #dedede; }
.doc-head { display: flex; height: 73px; }
.doc-icon { position: relative; width: 63.5px; }
.scroll-icon { width: 56px; padding-left: 1px; }
.emblem { position: absolute; left: 16px; top: 12px; }
.verified { position: absolute; left: 0; top: 37px; }
.doc-text { padding-top: 7px; white-space: nowrap; }
h2 { display: flex; align-items: center; font-size: 20px; line-height: 24px; font-weight: 600; letter-spacing: -.25px; gap: 10.5px; }
h2 svg { margin-top: -2px; }
.diploma { letter-spacing: -.73px; }
.ok, .attach { font-size: 16px; line-height: 20px; margin-top: 6px; color: #62c9a0; letter-spacing: -.12px; }
.attach { display: flex; align-items: center; gap: 8px; color: #5b8cd8; letter-spacing: .05px; }
li { display: flex; align-items: center; height: 36px; padding-left: 1px; font-size: 16px; line-height: 36px; letter-spacing: .18px; white-space: nowrap; list-style: none; }
li i { font-style: normal; color: #a9a9a9; margin-left: 8px; letter-spacing: .36px; }
li i.wide { margin-left: 7px; letter-spacing: -.03px; }
li svg { margin: -5px 0 0 19px; }
.group { padding-top: 52px; height: 269px; border-bottom: 1px solid #dedede; display: grid; row-gap: 40px; align-content: start; }
.group.columns { grid-template-columns: 293px 294px 1fr; border: 0; }
.field { height: 64px; white-space: nowrap; }
h3 { margin-left: -.5px; font-size: 22px; line-height: 28px; font-weight: 600; letter-spacing: -.29px; }
.field p { margin-top: 12px; font-size: 18px; line-height: 24px; letter-spacing: -.06px; display: flex; align-items: center; gap: 8px; }
.name { letter-spacing: -.133px; }
.date { letter-spacing: .42px; }
.snils { letter-spacing: -.37px; }

.scrollbar { width: 17px; background: #f1f1f1; display: flex; flex-direction: column; align-items: center; }
.thumb { width: 13px; height: 270px; background: #c1c1c1; margin: 61px 0 auto; }
.chat { position: absolute; right: 37px; bottom: 20px; }

.taskbar { height: 40px; display: flex; gap: 1px; background: #1c1c1c; font-family: "Open Sans", sans-serif; color: #fff; }
.task { width: 48px; height: 40px; display: flex; align-items: center; justify-content: center; }
.task.first { margin-left: 1px; }
.focused { background: #4a4a4a; box-shadow: inset 0 -2px #76b9ed; }
.open { background: linear-gradient(#76b9ed, #76b9ed) 50% 100% / 40px 2px no-repeat; }
.office { font: 700 11px "Open Sans", sans-serif; fill: #fff; }
.teams { font-size: 10px; }
.ij { font: 700 7.5px "Liberation Mono", monospace; fill: #fff; }
.tray { margin-left: auto; display: flex; align-items: center; font-size: 11.7px; letter-spacing: -.2px; white-space: nowrap; }
.tray > svg { margin-right: 12px; }
.tray > svg:nth-child(2) { margin-right: 11px; }
.tray > svg:nth-child(3) { margin-right: 8px; }
.tray > svg:nth-child(4) { margin-right: 11px; }
.clock { width: 54px; margin: 0 18px 0 14px; display: flex; flex-direction: column; align-items: center; line-height: 18px; font-size: 11.5px; letter-spacing: -.5px; }
.badge { font: 700 11px "Open Sans", sans-serif; fill: #fff; letter-spacing: 0; }
.notice { width: 26px; }
.peek { width: 1px; height: 40px; background: #666; margin: 0 4px 0 10px; }
```
